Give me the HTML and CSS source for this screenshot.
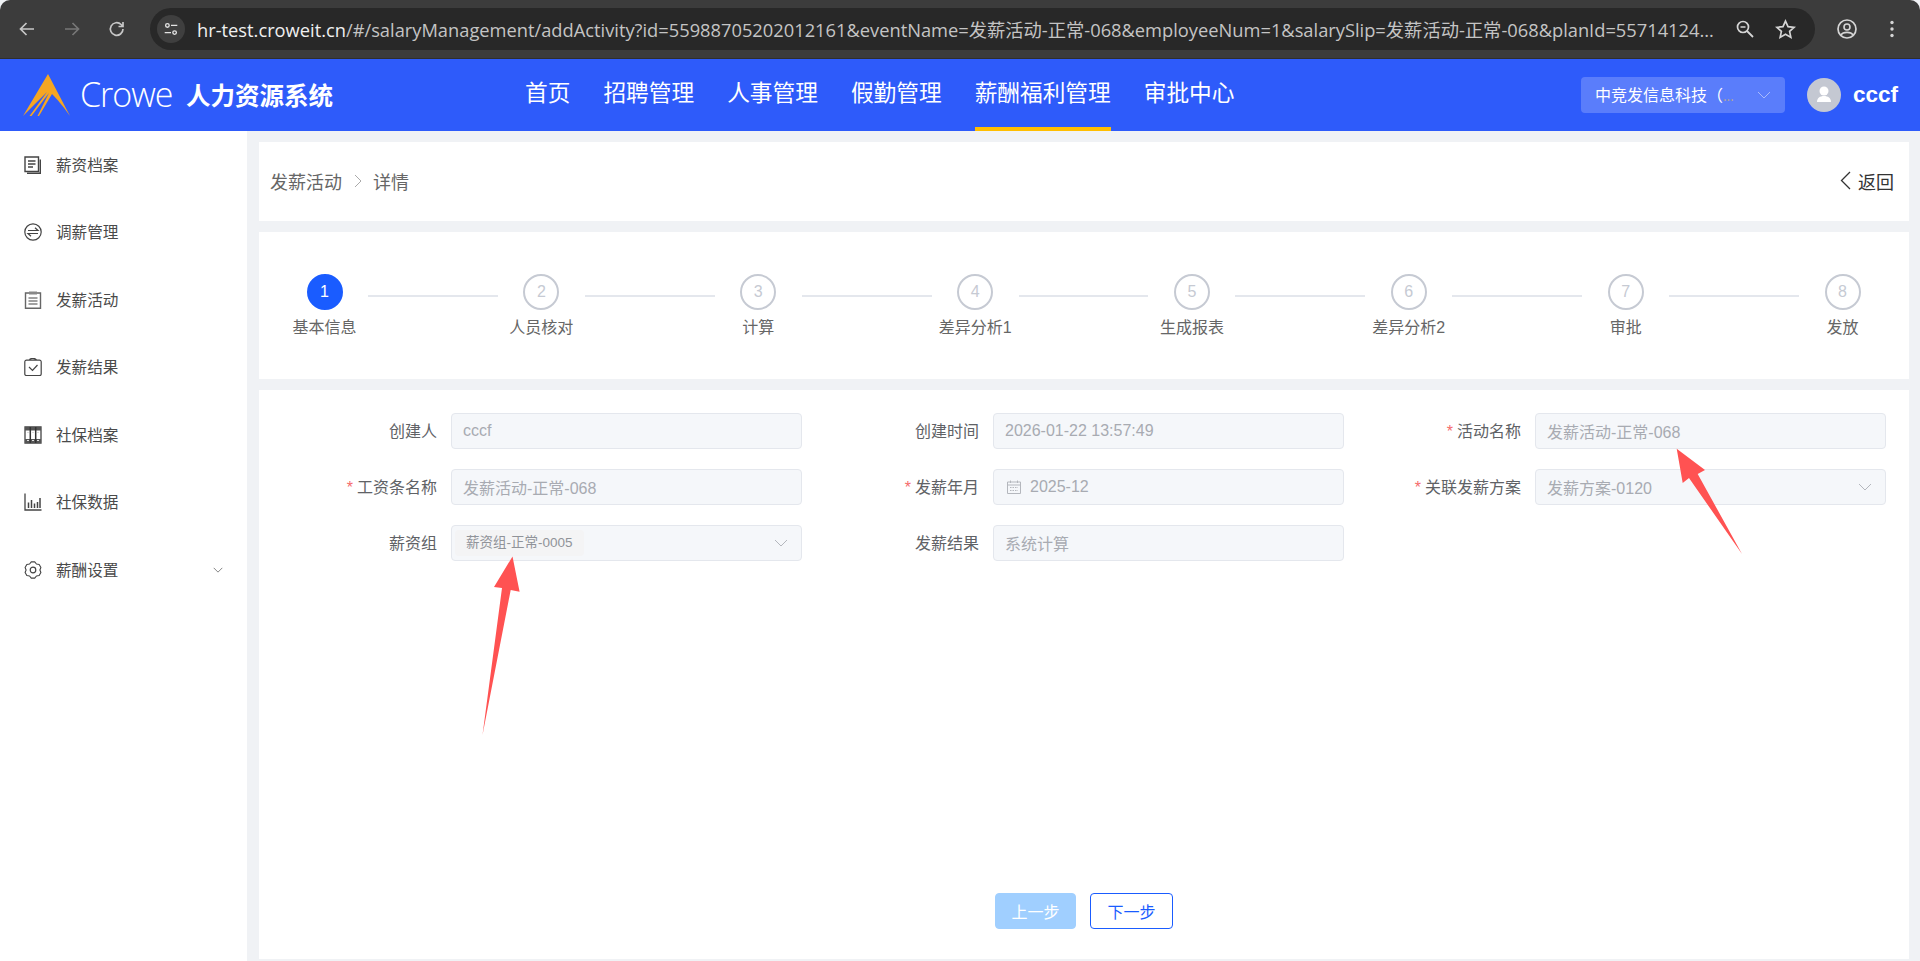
FILE: index.html
```html
<!DOCTYPE html>
<html lang="zh-CN">
<head>
<meta charset="utf-8">
<title>发薪活动</title>
<link rel="stylesheet" href="styles.css">
</head>
<body>
<div class="chrome">
  <svg class="cicon" viewBox="0 0 20 20"><path d="M17 10H4M9.500 4L3.500 10l6 6" fill="none" stroke="#c7c7c7" stroke-width="1.700"/></svg>
  <svg class="cicon" viewBox="0 0 20 20"><path d="M3 10h13M10.500 4l6 6-6 6" fill="none" stroke="#777" stroke-width="1.700"/></svg>
  <svg class="cicon" viewBox="0 0 20 20"><path d="M16 10a6.300 6.300 0 1 1-1.900-4.500L16 7.300M16 3v4.500h-4.500" fill="none" stroke="#c7c7c7" stroke-width="1.700"/></svg>
  <div class="omnibox">
    <span class="tune"><svg viewBox="0 0 20 20" width="18" height="18"><circle cx="6" cy="6" r="2" fill="none" stroke="#e3e3e3" stroke-width="1.500"/><path d="M10 6h7M3 14h7" stroke="#e3e3e3" stroke-width="1.500"/><circle cx="14" cy="14" r="2" fill="none" stroke="#e3e3e3" stroke-width="1.500"/></svg></span>
    <span class="url"><span class="host">hr-test.croweit.cn</span>/#/salaryManagement/addActivity?id=55988705202012161&amp;eventName=发薪活动-正常-068&amp;employeeNum=1&amp;salarySlip=发薪活动-正常-068&amp;planId=55714124...</span>
    <svg class="oicon" viewBox="0 0 20 20"><circle cx="8" cy="8" r="5.500" fill="none" stroke="#d5d5d5" stroke-width="1.700"/><path d="M12 12l6 6" stroke="#d5d5d5" stroke-width="1.800"/><path d="M5.500 8h5" stroke="#d5d5d5" stroke-width="1.500"/></svg>
    <svg class="oicon star" viewBox="0 0 20 20"><path d="M10 2l2.400 5.300 5.800.6-4.300 3.900 1.200 5.700L10 14.600l-5.100 2.900 1.200-5.700L1.800 7.900l5.800-.6z" fill="none" stroke="#d5d5d5" stroke-width="1.600"/></svg>
  </div>
  <svg class="cicon profile" viewBox="0 0 22 22"><circle cx="11" cy="11" r="9" fill="none" stroke="#d5d5d5" stroke-width="1.700"/><circle cx="11" cy="9" r="3" fill="none" stroke="#d5d5d5" stroke-width="1.600"/><path d="M5 17c2-3.500 10-3.500 12 0" fill="none" stroke="#d5d5d5" stroke-width="1.600"/></svg>
  <svg class="cicon dots" viewBox="0 0 20 20"><circle cx="10" cy="3.500" r="1.700" fill="#d5d5d5"/><circle cx="10" cy="10" r="1.700" fill="#d5d5d5"/><circle cx="10" cy="16.500" r="1.700" fill="#d5d5d5"/></svg>
</div>

<header class="topbar">
  <div class="brand">
    <svg class="logo" viewBox="0 0 48 42"><path d="M26 0L48 42C41 32 35 25 30 20L17 42L15.500 42L27 19L9.500 42L7.500 42L25 18L1 42Z" fill="#f5a623"/></svg>
    <span class="crowe">Crowe</span>
    <span class="sysname">人力资源系统</span>
  </div>
  <nav class="mainnav">
    <a class="navitem">首页</a>
    <a class="navitem">招聘管理</a>
    <a class="navitem">人事管理</a>
    <a class="navitem">假勤管理</a>
    <a class="navitem active">薪酬福利管理</a>
    <a class="navitem">审批中心</a>
  </nav>
  <div class="account">
    <div class="company"><span class="cname">中竞发信息科技（<span class="ell">...</span></span>
      <svg class="chev cchev" viewBox="0 0 14 8"><path d="M1 1l6 6 6-6" fill="none" stroke="#a9bbfb" stroke-width="1"/></svg></div>
    <span class="avatar"><svg viewBox="0 0 34 34" width="34" height="34"><circle cx="17" cy="13" r="4.500" fill="#fff"/><path d="M10 24c0-4 3-6 7-6s7 2 7 6z" fill="#fff"/></svg></span>
    <span class="uname">cccf</span>
  </div>
</header>

<div class="shell">
  <aside class="sidebar">
    <div class="sideitem"><svg class="sicon" viewBox="0 0 18 18"><path d="M1 1h13.500v14.500H1z" fill="none" stroke="#444" stroke-width="1.400"/><path d="M16.300 3.500v13.800H3" fill="none" stroke="#444" stroke-width="1.400"/><path d="M4 5h7.500M4 8h7.500M4 11h5" stroke="#444" stroke-width="1.300"/></svg><span>薪资档案</span></div>
    <div class="sideitem"><svg class="sicon" viewBox="0 0 18 18"><circle cx="9" cy="9" r="8.200" fill="none" stroke="#444" stroke-width="1.200"/><path d="M4 7.500h10L11 4.800M14 10.500H4L7 13.200" fill="none" stroke="#444" stroke-width="1.200"/></svg><span>调薪管理</span></div>
    <div class="sideitem"><svg class="sicon" viewBox="0 0 18 18"><path d="M5 2H1.500v15.300h15V2H13" fill="none" stroke="#666" stroke-width="1.400"/><path d="M5 .5h8v3H5z" fill="#888"/><path d="M4.500 7h9M4.500 10h9M4.500 13h9" stroke="#444" stroke-width="1.200"/></svg><span>发薪活动</span></div>
    <div class="sideitem"><svg class="sicon" viewBox="0 0 18 18"><path d="M5.500 2.200H2.500A1.700 1.700 0 0 0 .8 3.900v12A1.700 1.700 0 0 0 2.500 17.600h13a1.700 1.700 0 0 0 1.700-1.700v-12A1.700 1.700 0 0 0 15.500 2.200h-3M5.500 2.200a3.500 1.800 0 0 1 7 0z" fill="none" stroke="#444" stroke-width="1.200"/><path d="M5 9l3.500 3.500L13.500 7" fill="none" stroke="#444" stroke-width="1.200"/></svg><span>发薪结果</span></div>
    <div class="sideitem"><svg class="sicon" viewBox="0 0 18 18"><path d="M1 1h16v16H1z" fill="none" stroke="#444" stroke-width="1.300"/><path d="M1 1h16v3.500H1zM1 13h16v4H1z" fill="#555"/><path d="M3 6.500h2M8 6.500h2M13 6.500h2M3 14.500h2M8 14.500h2M13 14.500h2" stroke="#ddd" stroke-width="1.200"/><path d="M6.300 1v16M11.700 1v16" stroke="#333" stroke-width="1.500"/></svg><span>社保档案</span></div>
    <div class="sideitem"><svg class="sicon" viewBox="0 0 18 18"><path d="M1 .5v16.500h16.500" fill="none" stroke="#444" stroke-width="1.300"/><path d="M4.500 15V9.500M7.500 15V7M10.500 15v-4.500M13.500 15V9M16 15V5" stroke="#444" stroke-width="1.500"/></svg><span>社保数据</span></div>
    <div class="sideitem"><svg class="sicon" viewBox="0 0 18 18"><path d="M7.270 .88L10.730 .88L12.450 3.020L15.170 3.450L16.890 6.440L15.900 9L16.890 11.560L15.170 14.550L12.450 14.980L10.730 17.120L7.270 17.120L5.550 14.980L2.830 14.550L1.110 11.560L2.100 9L1.110 6.440L2.830 3.450L5.550 3.020Z" fill="none" stroke="#444" stroke-width="1.100" stroke-linejoin="round"/><circle cx="9" cy="9" r="2.800" fill="none" stroke="#444" stroke-width="1.200"/></svg><span>薪酬设置</span>
      <svg class="chev sidechev" viewBox="0 0 14 8"><path d="M1 1l6 6 6-6" fill="none" stroke="#555" stroke-width="1"/></svg></div>
  </aside>

  <main class="content">
    <section class="card crumbs">
      <div class="crumbpath">
        <span>发薪活动</span>
        <svg class="crumbsep" viewBox="0 0 8 14"><path d="M1 1l6 6-6 6" fill="none" stroke="#aaa" stroke-width="1"/></svg>
        <span>详情</span>
      </div>
      <div class="back">
        <svg class="backicon" viewBox="0 0 11 19"><path d="M10 1L1.500 9.500 10 18" fill="none" stroke="#333" stroke-width="1.300"/></svg>
        <span>返回</span>
      </div>
    </section>

    <section class="card steps">
      <div class="step on"><span class="num">1</span><span class="slabel">基本信息</span></div><i class="sline"></i>
      <div class="step"><span class="num">2</span><span class="slabel">人员核对</span></div><i class="sline"></i>
      <div class="step"><span class="num">3</span><span class="slabel">计算</span></div><i class="sline"></i>
      <div class="step"><span class="num">4</span><span class="slabel">差异分析1</span></div><i class="sline"></i>
      <div class="step"><span class="num">5</span><span class="slabel">生成报表</span></div><i class="sline"></i>
      <div class="step"><span class="num">6</span><span class="slabel">差异分析2</span></div><i class="sline"></i>
      <div class="step"><span class="num">7</span><span class="slabel">审批</span></div><i class="sline"></i>
      <div class="step"><span class="num">8</span><span class="slabel">发放</span></div>
    </section>

    <section class="card formcard">
      <div class="formgrid">
        <div class="field"><label class="flabel">创建人</label><div class="finput">cccf</div></div>
        <div class="field"><label class="flabel">创建时间</label><div class="finput">2026-01-22 13:57:49</div></div>
        <div class="field"><label class="flabel req">活动名称</label><div class="finput">发薪活动-正常-068</div></div>

        <div class="field"><label class="flabel req">工资条名称</label><div class="finput">发薪活动-正常-068</div></div>
        <div class="field"><label class="flabel req">发薪年月</label><div class="finput"><svg class="calicon" viewBox="0 0 14 14"><path d="M.5 2h13v11.500H.5zM.5 5h13M3.500 .5V3M10.500 .5V3" fill="none" stroke="#b4b7bd" stroke-width="1"/><path d="M3 7.500h8M3 10.500h8" stroke="#b4b7bd" stroke-width="1" stroke-dasharray="1.500 1"/></svg>2025-12</div></div>
        <div class="field"><label class="flabel req">关联发薪方案</label><div class="finput sel">发薪方案-0120<svg class="chev fchev" viewBox="0 0 14 8"><path d="M1 1l6 6 6-6" fill="none" stroke="#b4b7bd" stroke-width="1"/></svg></div></div>

        <div class="field"><label class="flabel">薪资组</label><div class="finput sel tagged"><span class="tag">薪资组-正常-0005</span><svg class="chev fchev" viewBox="0 0 14 8"><path d="M1 1l6 6 6-6" fill="none" stroke="#b4b7bd" stroke-width="1"/></svg></div></div>
        <div class="field"><label class="flabel">发薪结果</label><div class="finput">系统计算</div></div>
      </div>
      <div class="actions">
        <button class="btn prev" type="button">上一步</button>
        <button class="btn next" type="button">下一步</button>
      </div>
    </section>
  </main>
</div>

<svg class="annot" viewBox="0 0 1920 961" width="1920" height="961">
  <polygon points="512.500,556.500 494,587 502,588 482.500,735 510.700,590 519.600,591.700" fill="#ff5252"/>
  <polygon points="1676.700,448.700 1705,470 1697.700,474 1742,554 1689,478 1682.700,483" fill="#ff5252"/>
</svg>
</body>
</html>
```

FILE: styles.css
```css
* { box-sizing: border-box; }
html, body { margin: 0; padding: 0; height: 961px; overflow: hidden; }
body {
  font-family: "Liberation Sans", "Noto Sans CJK SC", sans-serif;
  background: #f0f2f5;
  color: #606266;
  position: relative;
}

/* browser chrome */
.chrome {
  height: 59px;
  background: #3c3c3c;
  border-bottom: 1px solid #2f2f2f;
  display: flex;
  align-items: center;
  padding-left: 17px;
  border-radius: 10px 10px 0 0;
}
.cicon { width: 20px; height: 20px; margin-right: 25px; flex: none; }
.omnibox {
  width: 1665px;
  height: 42px;
  margin-left: -2px;
  border-radius: 21px;
  background: #282828;
  display: flex;
  align-items: center;
  padding-left: 7px;
  flex: none;
}
.tune {
  width: 28px; height: 28px;
  border-radius: 50%;
  background: #3f3f3f;
  display: flex; align-items: center; justify-content: center;
  margin-right: 12px;
  flex: none;
}
.url {
  font-family: "Open Sans", "Noto Sans CJK SC", sans-serif;
  font-size: 18.300px;
  color: #c4c4c4;
  white-space: nowrap;
  width: 1530px;
  flex: none;
}
.host { color: #f0f0f0; }
.oicon { width: 20px; height: 20px; margin-left: 8px; flex: none; }
.oicon.star { width: 21px; height: 21px; margin-left: 20px; }
.profile { width: 22px; height: 22px; margin-left: 21px; margin-right: 24px; }
.dots { margin-right: 0; }

/* top bar */
.topbar {
  height: 72px;
  background: #2e5bfa;
  display: flex;
  align-items: stretch;
  color: #fff;
}
.brand { width: 525px; display: flex; align-items: center; padding-left: 22px; flex: none; }
.logo { width: 48px; height: 42px; flex: none; margin-top: -1px; }
.crowe {
  font-family: "Open Sans", sans-serif;
  font-weight: 300;
  font-size: 34px;
  letter-spacing: -1px;
  margin: -3px 0 0 10px;
  width: 106px;
}
.sysname { font-size: 24.500px; font-weight: 700; font-family: "Noto Sans CJK SC", sans-serif; white-space: nowrap; padding-bottom: 2px; }
.mainnav { display: flex; gap: 33px; }
.navitem {
  font-family: "Noto Sans CJK SC", sans-serif;
  font-size: 22.700px;
  line-height: 66px;
  height: 72px;
  border-bottom: 4px solid transparent;
}
.navitem.active { border-bottom-color: #ffbe00; }
.account { margin-left: auto; display: flex; align-items: center; padding-right: 22px; }
.company {
  width: 204px; height: 36px;
  background: #5a7dfb;
  border-radius: 4px;
  display: flex; align-items: center;
  padding: 0 0 2px 14px;
  font-size: 16px;
  position: relative;
  font-family: "Noto Sans CJK SC", sans-serif;
}
.ell { color: #b8a890; font-size: 13px; }
.chev { display: block; }
.cchev { width: 14px; height: 8px; position: absolute; right: 14px; top: 14px; }
.avatar { width: 34px; height: 34px; border-radius: 50%; background: #c4c8d2; margin-left: 22px; flex: none; }
.uname { font-size: 22.500px; font-weight: 700; margin-left: 12px; }

/* shell */
.shell { display: flex; height: 830px; }
.sidebar { width: 247px; background: #fff; flex: none; }
.sideitem {
  height: 67.500px;
  display: flex;
  align-items: center;
  padding-left: 24px;
  font-size: 15.600px;
  color: #4a4a4a;
  font-family: "Noto Sans CJK SC", sans-serif;
}
.sideitem > span { position: relative; top: -1px; }
.sicon { width: 18px; height: 18px; margin-right: 14px; flex: none; }
.sidechev { width: 10px; height: 6px; margin-left: auto; margin-right: 24px; }

.content { flex: 1; padding: 11px 11px 2px 12px; display: flex; flex-direction: column; gap: 11px; }
.card { background: #fff; }

.crumbs {
  height: 79px;
  display: flex;
  align-items: center;
  justify-content: space-between;
  padding: 0 15px 2px 11px;
  font-size: 18px;
  font-family: "Noto Sans CJK SC", sans-serif;
}
.crumbpath { display: flex; align-items: center; color: #666; }
.crumbsep { width: 8px; height: 14px; margin: 0 11px 0 12px; }
.back { display: flex; align-items: center; color: #333; }
.backicon { width: 11px; height: 19px; margin-right: 7px; }

.steps {
  height: 147px;
  display: flex;
  align-items: flex-start;
  padding: 42px 23px 0 22px;
}
.step { width: 87px; flex: none; display: flex; flex-direction: column; align-items: center; }
.num {
  width: 36px; height: 36px;
  border-radius: 50%;
  border: 2px solid #c6cad3;
  color: #c6cad3;
  font-size: 16px;
  display: flex; align-items: center; justify-content: center;
}
.step.on .num { background: #1a5cff; border-color: #1a5cff; color: #fff; }
.slabel {
  font-size: 16px;
  color: #666;
  line-height: 24px;
  margin-top: 6px;
  white-space: nowrap;
}
.sline { flex: 1; height: 1.500px; background: #e4e7ed; margin-top: 21px; }

.formcard { flex: 1; display: flex; flex-direction: column; }
.formgrid {
  display: grid;
  grid-template-columns: repeat(3, 1fr);
  row-gap: 20px;
  padding: 23px 12px 0;
}
.field { display: flex; align-items: center; padding-right: 11.500px; }
.flabel {
  width: 166px;
  margin-right: 14px;
  padding-bottom: 3px;
  text-align: right;
  font-size: 16px;
  color: #606266;
  font-family: "Noto Sans CJK SC", sans-serif;
  flex: none;
}
.req::before { content: "*"; color: #f56c6c; margin-right: 4px; font-family: "Liberation Sans", sans-serif; }
.finput {
  flex: 1;
  height: 36px;
  background: #f5f7fa;
  border: 1px solid #e4e7ed;
  border-radius: 4px;
  display: flex;
  align-items: center;
  padding: 0 11px;
  font-size: 16px;
  color: #a8abb2;
  position: relative;
  white-space: nowrap;
}
.calicon { width: 14px; height: 14px; margin: 0 9px 0 2px; }
.fchev { width: 14px; height: 8px; position: absolute; right: 13px; top: 13px; }
.tagged { padding-left: 3px; }
.tag {
  height: 26px;
  line-height: 26px;
  padding: 0 11px;
  background: #f4f4f5;
  border-radius: 4px;
  font-size: 13.500px;
  color: #909399;
}
.actions { margin-top: auto; display: flex; justify-content: center; gap: 14px; padding-bottom: 30px; }
.btn {
  width: 81px; height: 36px;
  border-radius: 4px;
  font-size: 16px;
  font-family: "Noto Sans CJK SC", sans-serif;
  background: #fff;
  padding: 0;
}
.btn.prev { background: #a0cfff; border: 1px solid #a0cfff; color: #fff; }
.btn.next { width: 83px; border: 1px solid #1a5cff; color: #1a5cff; }

.annot { position: absolute; left: 0; top: 0; pointer-events: none; }
```
